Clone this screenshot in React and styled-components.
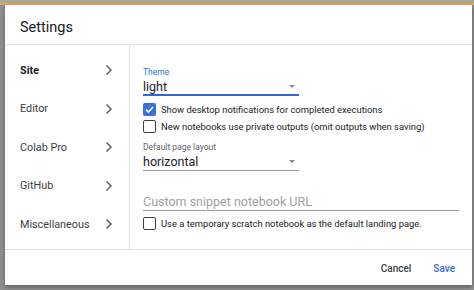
import React from "react";
import styled, { createGlobalStyle } from "styled-components";

const Global = createGlobalStyle`
  html, body { margin: 0; padding: 0; }
  body { font-family: Roboto, "Liberation Sans", sans-serif; background: #8e8e8e; }
  * { box-sizing: border-box; }
`;

const Backdrop = styled.div`
  width: 474px;
  height: 290px;
  background: #8f8f8f;
  display: flex;
  flex-direction: column;
  overflow: hidden;
`;

const TopStrip = styled.div`
  height: 5px;
  flex: none;
  background: linear-gradient(to bottom, #a9a79a 0 3px, #f0a24a 3px 5px);
`;

const Stage = styled.div`
  flex: 1;
  padding: 0 2px 5px 5px;
  display: flex;
`;

const Dialog = styled.div`
  flex: 1;
  background: #fff;
  display: flex;
  flex-direction: column;
  box-shadow: 0 2px 4px rgba(0,0,0,0.35);
`;

const Title = styled.div`
  height: 40px;
  flex: none;
  padding: 6px 15px 0;
  display: flex;
  align-items: center;
  font-size: 14.5px;
  color: #202124;
  border-bottom: 1px solid #e0e0e0;
`;

const Body = styled.div`
  flex: 1;
  display: flex;
  border-bottom: 1px solid #e0e0e0;
`;

const Nav = styled.div`
  width: 125px;
  flex: none;
  border-right: 1px solid #e0e0e0;
  display: flex;
  flex-direction: column;
  padding-top: 6px;
`;

const NavItem = styled.div`
  height: 38.5px;
  display: flex;
  align-items: center;
  justify-content: space-between;
  padding: 0 16px 0 15px;
  font-size: 10.8px;
  font-weight: ${p => (p.$active ? 700 : 400)};
  color: ${p => (p.$active ? "#202124" : "#3c4043")};
`;

const Chevron = () => (
  <svg width="8" height="12" viewBox="0 0 8 12">
    <path d="M1.5 1.5 L6 6 L1.5 10.5" fill="none" stroke="#5f6368" strokeWidth="1.5" />
  </svg>
);

const Content = styled.div`
  flex: 1;
  padding: 22px 13px 0 13px;
  display: flex;
  flex-direction: column;
`;

const Field = styled.div`
  width: ${p => p.$w}px;
  display: flex;
  flex-direction: column;
  margin-bottom: ${p => p.$mb || 0}px;
`;

const Label = styled.div`
  font-size: 8.5px;
  color: ${p => (p.$focus ? "#1a73e8" : "#5f6368")};
  height: 11px;
  line-height: 11px;
`;

const Select = styled.div`
  height: 18px;
  display: flex;
  align-items: center;
  justify-content: space-between;
  font-size: 12.5px;
  color: #202124;
  border-bottom: ${p => (p.$focus ? "2px solid #3367d6" : "1px solid #9e9e9e")};
  padding-right: 4px;
`;

const Caret = styled.span`
  width: 0;
  height: 0;
  border-left: 3.5px solid transparent;
  border-right: 3.5px solid transparent;
  border-top: 3.5px solid #8a8a8a;
`;

const Input = styled.div`
  height: 19px;
  display: flex;
  align-items: center;
  font-size: 12.5px;
  color: #9aa0a6;
  border-bottom: 1px solid #9e9e9e;
`;

const CheckRow = styled.label`
  display: flex;
  align-items: center;
  gap: 5px;
  height: 17px;
  font-size: 9.4px;
  color: #202124;
  margin-bottom: ${p => p.$mb || 0}px;
`;

const Box = styled.span`
  width: 13px;
  height: 13px;
  flex: none;
  border-radius: 2px;
  border: ${p => (p.$checked ? "none" : "1.6px solid #3c4043")};
  background: ${p => (p.$checked ? "#3b6fdc" : "#fff")};
  display: flex;
  align-items: center;
  justify-content: center;
`;

const Check = ({ checked }) => (
  <Box $checked={checked}>
    {checked && (
      <svg width="11" height="11" viewBox="0 0 11 11">
        <path d="M2 5.6 L4.4 8 L9 3" fill="none" stroke="#fff" strokeWidth="1.6" />
      </svg>
    )}
  </Box>
);

const Footer = styled.div`
  height: 35px;
  flex: none;
  display: flex;
  justify-content: flex-end;
  align-items: center;
  gap: 4px;
  padding: 1px 8px 0 0;
`;

const Button = styled.button`
  border: none;
  background: none;
  font-family: Roboto, "Liberation Sans", sans-serif;
  font-size: 10px;
  font-weight: 500;
  padding: 6px 9px;
  color: ${p => (p.$primary ? "#3367d6" : "#3c4043")};
`;

const navItems = ["Site", "Editor", "Colab Pro", "GitHub", "Miscellaneous"];

export default function App() {
  return (
    <>
      <Global />
      <Backdrop>
        <TopStrip />
        <Stage>
          <Dialog>
            <Title>Settings</Title>
            <Body>
              <Nav>
                {navItems.map((n, i) => (
                  <NavItem key={n} $active={i === 0}>
                    <span>{n}</span>
                    <Chevron />
                  </NavItem>
                ))}
              </Nav>
              <Content>
                <Field $w={156} $mb={5}>
                  <Label $focus>Theme</Label>
                  <Select $focus>
                    <span>light</span>
                    <Caret />
                  </Select>
                </Field>
                <CheckRow>
                  <Check checked />
                  Show desktop notifications for completed executions
                </CheckRow>
                <CheckRow $mb={7}>
                  <Check />
                  New notebooks use private outputs (omit outputs when saving)
                </CheckRow>
                <Field $w={156} $mb={21}>
                  <Label>Default page layout</Label>
                  <Select>
                    <span>horizontal</span>
                    <Caret />
                  </Select>
                </Field>
                <Field $w={316} $mb={4}>
                  <Input>Custom snippet notebook URL</Input>
                </Field>
                <CheckRow>
                  <Check />
                  Use a temporary scratch notebook as the default landing page.
                </CheckRow>
              </Content>
            </Body>
            <Footer>
              <Button>Cancel</Button>
              <Button $primary>Save</Button>
            </Footer>
          </Dialog>
        </Stage>
      </Backdrop>
    </>
  );
}
